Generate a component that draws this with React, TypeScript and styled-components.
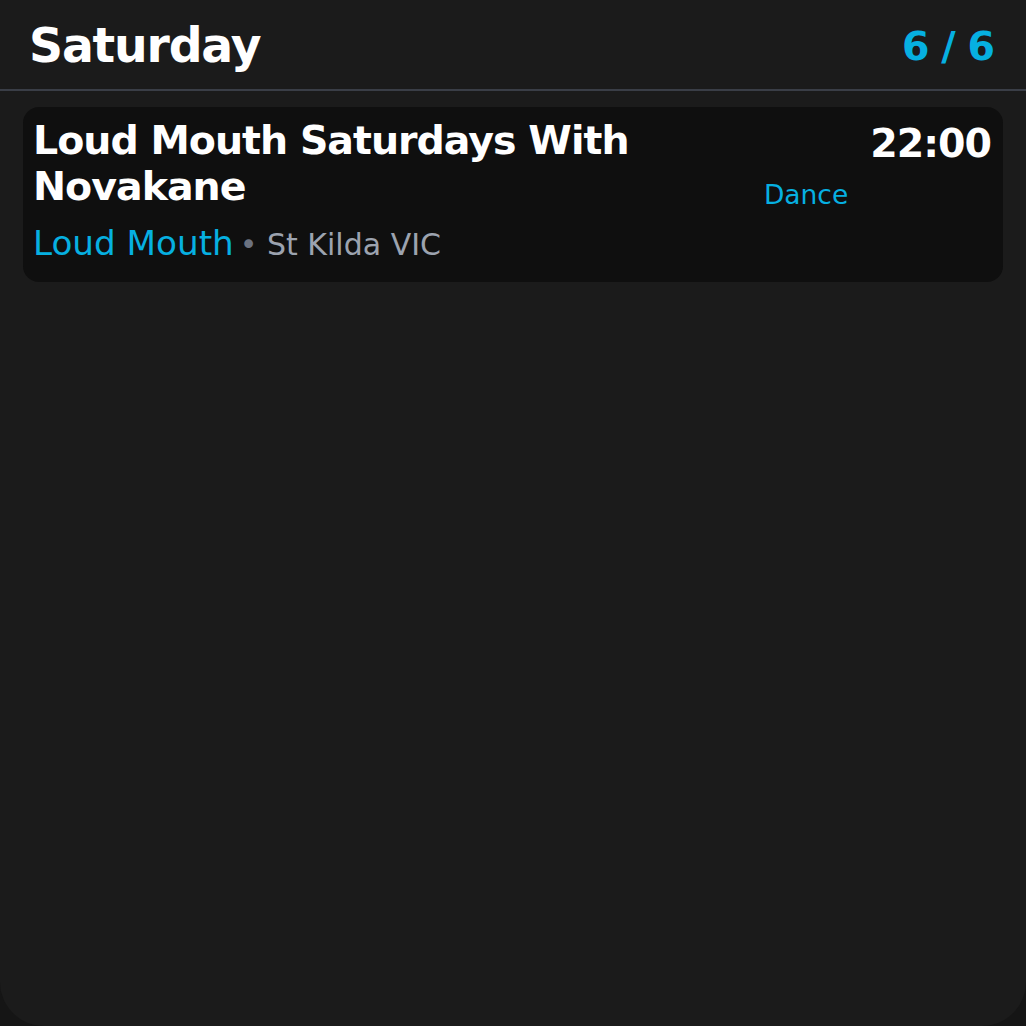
import React from "react";
import styled, { createGlobalStyle } from "styled-components";

const GlobalStyle = createGlobalStyle`
  html, body {
    margin: 0;
    padding: 0;
    background: #151515;
  }
  body {
    font-family: "DejaVu Sans", "Liberation Sans", sans-serif;
    color: #ffffff;
  }
  * { box-sizing: border-box; }
`;

const Screen = styled.div`
  width: 1026px;
  height: 1026px;
  background: #1b1b1b;
  border-radius: 0 0 44px 44px;
  display: flex;
  flex-direction: column;
  overflow: hidden;
`;

const Header = styled.header`
  display: flex;
  align-items: center;
  justify-content: space-between;
  padding: 19px 32px 17px 29px;
  border-bottom: 2px solid #3a3e47;
  height: 91px;
`;

const DayTitle = styled.h1`
  margin: 0;
  font-size: 47.3px;
  font-weight: 700;
  letter-spacing: -0.025em;
  line-height: normal;
  color: #ffffff;
`;

const Counter = styled.span`
  font-size: 39.5px;
  font-weight: 700;
  letter-spacing: -0.025em;
  color: #06b0e1;
`;

const List = styled.main`
  display: flex;
  flex-direction: column;
  gap: 12px;
  padding: 16px 23px;
`;

const Card = styled.article`
  display: flex;
  align-items: flex-start;
  gap: 22px;
  background: #0f0f0f;
  border-radius: 16px;
  padding: 10px 12px 19px 10px;
`;

const Info = styled.div`
  flex: 1;
  min-width: 0;
  display: flex;
  flex-direction: column;
  gap: 14px;
`;

const EventTitle = styled.h2`
  margin: 0;
  font-size: 39.5px;
  font-weight: 700;
  letter-spacing: -0.025em;
  line-height: normal;
  color: #ffffff;
`;

const Meta = styled.div`
  display: flex;
  align-items: baseline;
  gap: 6px;
  white-space: nowrap;
`;

const Venue = styled.span`
  font-size: 34.2px;
  color: #06b0e1;
`;

const Location = styled.span`
  font-size: 30px;
  color: #9ca3af;
`;

const Dot = styled.span`
  color: #6b7280;
`;

const Genre = styled.span`
  align-self: center;
  padding-top: 8px;
  font-size: 26.5px;
  color: #06b0e1;
`;

const Time = styled.span`
  padding-top: 3px;
  font-size: 39.5px;
  font-weight: 700;
  letter-spacing: -0.025em;
  line-height: normal;
  color: #ffffff;
`;

type EventItem = {
  title: string;
  venue: string;
  location: string;
  genre: string;
  time: string;
};

const events: EventItem[] = [
  {
    title: "Loud Mouth Saturdays With Novakane",
    venue: "Loud Mouth",
    location: "St Kilda VIC",
    genre: "Dance",
    time: "22:00",
  },
];

export default function App() {
  return (
    <>
      <GlobalStyle />
      <Screen>
        <Header>
          <DayTitle>Saturday</DayTitle>
          <Counter>6 / 6</Counter>
        </Header>
        <List>
          {events.map((e) => (
            <Card key={e.title}>
              <Info>
                <EventTitle>{e.title}</EventTitle>
                <Meta>
                  <Venue>{e.venue}</Venue>
                  <Location>
                    <Dot>•</Dot> {e.location}
                  </Location>
                </Meta>
              </Info>
              <Genre>{e.genre}</Genre>
              <Time>{e.time}</Time>
            </Card>
          ))}
        </List>
      </Screen>
    </>
  );
}
